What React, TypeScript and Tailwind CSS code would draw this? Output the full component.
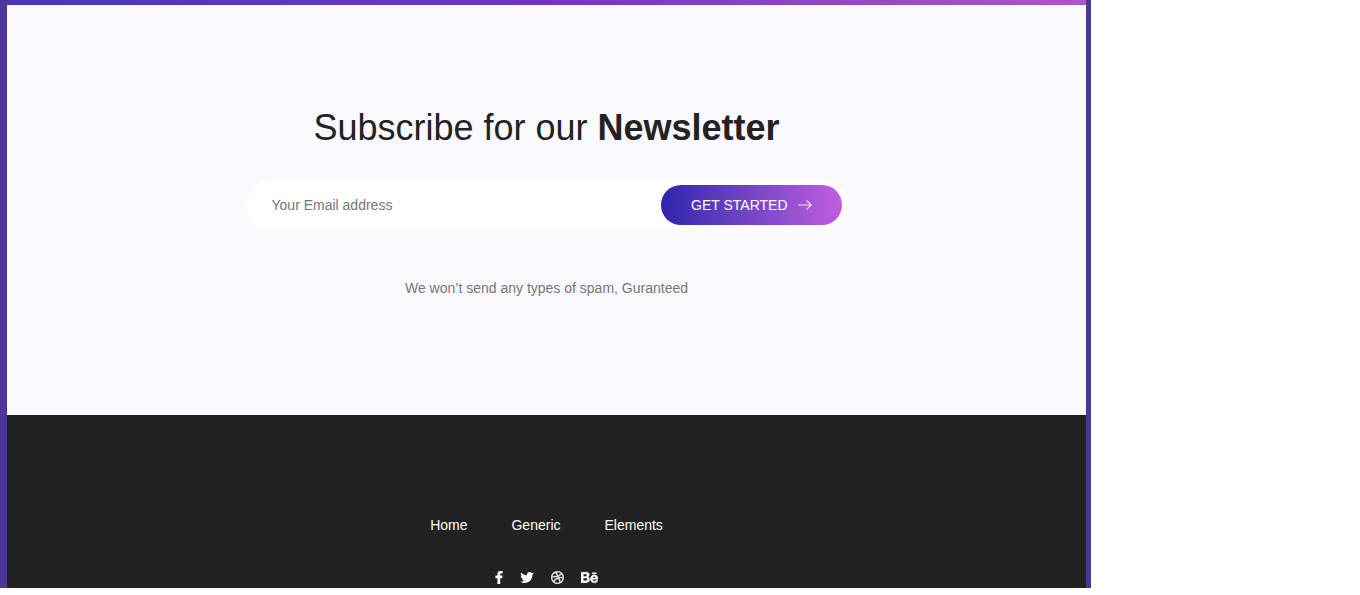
import React from 'react';
import { FaBehance, FaDribbble } from 'react-icons/fa';

const links = ['Home', 'Generic', 'Elements'];

function FacebookIcon() {
  return (
    <svg viewBox="479 0 864 1664" className="h-[13px] w-[8px]" fill="currentColor" stroke="currentColor" strokeWidth="50" aria-hidden="true">
      <path d="M1343 12v264h-157q-86 0-116 36t-30 108v189h293l-39 296h-254v759h-306v-759h-255v-296h255v-218q0-186 104-288.5t277-102.5q147 0 228 12z" />
    </svg>
  );
}

function TwitterIcon() {
  return (
    <svg viewBox="108 256 1576 1280" className="h-[11px] w-[14px]" fill="currentColor" aria-hidden="true">
      <path d="M1684 408q-67 98-162 167 1 14 1 42 0 130-38 259.5t-115.5 248.5-184.5 210.5-258 146-323 54.5q-271 0-496-145 35 4 78 4 225 0 401-138-105-2-188-64.5t-114-159.5q33 5 61 5 43 0 85-11-112-23-185.5-111.5t-73.5-205.5v-4q68 38 146 41-66-44-105-115t-39-154q0-88 44-163 121 149 294.5 238.5t371.5 99.5q-8-38-8-74 0-134 94.5-228.5t228.5-94.5q140 0 236 102 109-21 205-78-37 115-142 178 93-10 186-50z" />
    </svg>
  );
}

function ArrowIcon() {
  return (
    <svg viewBox="0 0 14 10" className="h-[10px] w-[14px]" fill="none" stroke="currentColor" strokeLinecap="round" strokeLinejoin="round" aria-hidden="true">
      <path d="M.5 5h12.7M9 1l4.2 4L9 9" strokeWidth="1.1" strokeOpacity=".85" />
    </svg>
  );
}

export default function App() {
  return (
    <div className="bg-white font-['Liberation_Sans',Arial,sans-serif] text-sm">
      <div className="mr-[269px] border-r-[5px] border-l-[7px] border-[#4c3799]">
        <div className="h-[5px] bg-linear-to-r from-[#4637b8] via-[#7138b6] to-[#b153c9]" />

        <section className="flex flex-col items-center bg-[#f9f9ff] px-4 pt-[100px] pb-[116px]">
          <h2 className="text-center text-4xl leading-[45px] text-[#222222]">
            Subscribe for our <b>Newsletter</b>
          </h2>
          <form
            className="mt-[30px] flex h-[50px] w-full max-w-[600px] items-center rounded-full bg-white pr-[5px] pl-[25px]"
            onSubmit={(e) => e.preventDefault()}
          >
            <input
              type="email"
              aria-label="Your Email address"
              placeholder="Your Email address"
              className="min-w-0 flex-1 bg-transparent text-[#222222] outline-none placeholder:text-[#777777]"
            />
            <button
              type="submit"
              className="flex h-10 shrink-0 items-center gap-[10px] rounded-full bg-linear-to-r from-[#3023ae] to-[#c15ddd] px-[30px] text-white"
            >
              GET STARTED
              <ArrowIcon />
            </button>
          </form>
          <p className="mt-12 leading-[21px] text-[#777777]">We won’t send any types of spam, Guranteed</p>
        </section>

        <footer className="flex flex-col items-center bg-[#222222] pt-[100px] pb-[2px] text-white">
          <nav className="flex gap-11 leading-[21px]">
            {links.map((label) => (
              <a key={label} href="#">
                {label}
              </a>
            ))}
          </nav>
          <div className="mt-[33px] flex h-[17px] items-center gap-[17px]">
            <a href="#" aria-label="Facebook">
              <FacebookIcon />
            </a>
            <a href="#" aria-label="Twitter">
              <TwitterIcon />
            </a>
            <a href="#" aria-label="Dribbble">
              <FaDribbble className="size-[13px] stroke-current stroke-[14px]" />
            </a>
            <a href="#" aria-label="Behance">
              <FaBehance className="size-[17px] stroke-current stroke-[14px]" />
            </a>
          </div>
        </footer>
      </div>
    </div>
  );
}
